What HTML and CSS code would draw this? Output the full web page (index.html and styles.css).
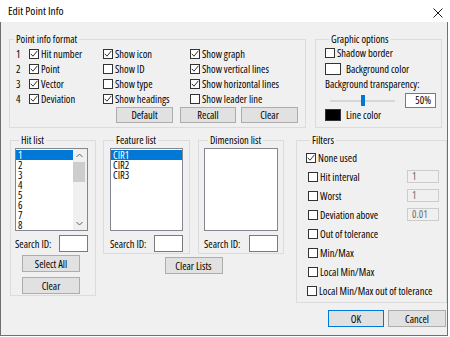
FILE: index.html
```html
<!DOCTYPE html>
<html>
<head>
<meta charset="utf-8">
<title>Edit Point Info</title>
<link rel="stylesheet" href="styles.css">
</head>
<body>
<div class="window">
  <div class="titlebar">
    <span class="title">Edit Point Info</span>
    <svg class="close" width="10" height="10" viewBox="0 0 10 10"><path d="M0.5 0.5 L9.5 9.5 M9.5 0.5 L0.5 9.5" stroke="#1a1a1a" stroke-width="1" fill="none"/></svg>
  </div>
  <div class="client">
    <div class="toprow">
      <fieldset class="group format">
        <legend>Point info format</legend>
        <div class="format-grid">
          <span class="num">1</span>
          <label class="chk"><span class="box"><svg width="8" height="8" viewBox="0 0 8 8"><path d="M0.8 3.8 L3 6.2 L7.4 0.8" stroke="#333" fill="none"/></svg></span>Hit number</label>
          <label class="chk"><span class="box"><svg width="8" height="8" viewBox="0 0 8 8"><path d="M0.8 3.8 L3 6.2 L7.4 0.8" stroke="#333" fill="none"/></svg></span>Show icon</label>
          <label class="chk"><span class="box"><svg width="8" height="8" viewBox="0 0 8 8"><path d="M0.8 3.8 L3 6.2 L7.4 0.8" stroke="#333" fill="none"/></svg></span>Show graph</label>

          <span class="num">2</span>
          <label class="chk"><span class="box"><svg width="8" height="8" viewBox="0 0 8 8"><path d="M0.8 3.8 L3 6.2 L7.4 0.8" stroke="#333" fill="none"/></svg></span>Point</label>
          <label class="chk"><span class="box"></span>Show ID</label>
          <label class="chk"><span class="box"><svg width="8" height="8" viewBox="0 0 8 8"><path d="M0.8 3.8 L3 6.2 L7.4 0.8" stroke="#333" fill="none"/></svg></span>Show vertical lines</label>

          <span class="num">3</span>
          <label class="chk"><span class="box"><svg width="8" height="8" viewBox="0 0 8 8"><path d="M0.8 3.8 L3 6.2 L7.4 0.8" stroke="#333" fill="none"/></svg></span>Vector</label>
          <label class="chk"><span class="box"></span>Show type</label>
          <label class="chk"><span class="box"><svg width="8" height="8" viewBox="0 0 8 8"><path d="M0.8 3.8 L3 6.2 L7.4 0.8" stroke="#333" fill="none"/></svg></span>Show horizontal lines</label>

          <span class="num">4</span>
          <label class="chk"><span class="box"><svg width="8" height="8" viewBox="0 0 8 8"><path d="M0.8 3.8 L3 6.2 L7.4 0.8" stroke="#333" fill="none"/></svg></span>Deviation</label>
          <label class="chk"><span class="box"><svg width="8" height="8" viewBox="0 0 8 8"><path d="M0.8 3.8 L3 6.2 L7.4 0.8" stroke="#333" fill="none"/></svg></span>Show headings</label>
          <label class="chk"><span class="box"></span>Show leader line</label>
        </div>
        <div class="format-buttons">
          <button class="btn b-default">Default</button>
          <button class="btn b-recall">Recall</button>
          <button class="btn b-clear">Clear</button>
        </div>
      </fieldset>

      <fieldset class="group graphic">
        <legend>Graphic options</legend>
        <label class="chk g-shadow"><span class="box"></span>Shadow border</label>
        <div class="swatch-row sw-bg"><span class="swatch"></span>Background color</div>
        <div class="trans">Background transparency:</div>
        <div class="slider-row">
          <div class="slider"><span class="thumb"></span></div>
          <div class="pct">50%</div>
        </div>
        <div class="swatch-row sw-line"><span class="swatch black"></span>Line color</div>
      </fieldset>
    </div>

    <div class="bottomrow">
      <fieldset class="group hit">
        <legend>Hit list</legend>
        <div class="listbox">
          <div class="items">
            <div class="item sel">1</div>
            <div class="item">2</div>
            <div class="item">3</div>
            <div class="item">4</div>
            <div class="item">5</div>
            <div class="item">6</div>
            <div class="item">7</div>
            <div class="item">8</div>
          </div>
          <div class="scrollbar">
            <div class="arrow"><svg width="7" height="5" viewBox="0 0 7 5"><path d="M0.5 4 L3.5 1 L6.5 4" stroke="#606060" fill="none"/></svg></div>
            <div class="sthumb"></div>
            <div class="strack"></div>
            <div class="arrow"><svg width="7" height="5" viewBox="0 0 7 5"><path d="M0.5 1 L3.5 4 L6.5 1" stroke="#606060" fill="none"/></svg></div>
          </div>
        </div>
        <div class="search"><span>Search ID:</span><span class="edit"></span></div>
        <button class="btn hit-btn b-selall">Select All</button>
        <button class="btn hit-btn b-hclear">Clear</button>
      </fieldset>

      <div class="fd">
        <div class="fd-groups">
          <fieldset class="group feature">
            <legend>Feature list</legend>
            <div class="listbox">
              <div class="items">
                <div class="item sel">CIR1</div>
                <div class="item">CIR2</div>
                <div class="item">CIR3</div>
              </div>
            </div>
            <div class="search"><span>Search ID:</span><span class="edit"></span></div>
          </fieldset>
          <fieldset class="group dim">
            <legend>Dimension list</legend>
            <div class="listbox wide">
              <div class="items"></div>
            </div>
            <div class="search wide"><span>Search ID:</span><span class="edit"></span></div>
          </fieldset>
        </div>
        <button class="btn clearlists">Clear Lists</button>
      </div>

      <div class="right">
        <fieldset class="group filters">
          <legend>Filters</legend>
          <label class="chk frow first"><span class="box"><svg width="8" height="8" viewBox="0 0 8 8"><path d="M0.8 3.8 L3 6.2 L7.4 0.8" stroke="#333" fill="none"/></svg></span>None used</label>
          <div class="frow ind"><label class="chk"><span class="box"></span>Hit interval</label><span class="fedit">1</span></div>
          <div class="frow ind"><label class="chk"><span class="box"></span>Worst</label><span class="fedit">1</span></div>
          <div class="frow ind"><label class="chk"><span class="box"></span>Deviation above</label><span class="fedit">0.01</span></div>
          <div class="frow ind"><label class="chk"><span class="box"></span>Out of tolerance</label></div>
          <div class="frow ind"><label class="chk"><span class="box"></span>Min/Max</label></div>
          <div class="frow ind"><label class="chk"><span class="box"></span>Local Min/Max</label></div>
          <div class="frow ind1"><label class="chk"><span class="box"></span>Local Min/Max out of tolerance</label></div>
        </fieldset>
        <div class="okcancel">
          <button class="btn b-ok">OK</button>
          <button class="btn b-cancel">Cancel</button>
        </div>
      </div>
    </div>
  </div>
</div>
</body>
</html>
```

FILE: styles.css
```css
* { box-sizing: border-box; }
html, body { margin: 0; padding: 0; background: #ffffff; }
body {
  font-family: "Open Sans", "Liberation Sans", Arial, sans-serif;
  font-stretch: 87.5%;
  font-weight: 400;
  font-size: 10.5px;
  color: #000;
}
.window { width: 448px; height: 336px; display: flex; flex-direction: column; }
.titlebar {
  height: 22px; flex: none; background: #fff;
  display: flex; justify-content: space-between; align-items: flex-start;
  padding: 0 5px 0 8px;
}
.title { font-size: 11.5px; line-height: 14px; margin-top: 4px; }
.close { margin-top: 8px; display: block; }
.client {
  flex: 1; background: #f0f0f0;
  border: 1px solid #707070; border-top: 0;
}

.group { margin: 0; padding: 0; border: 1px solid #dcdcdc; min-width: 0; }
.group legend { padding: 0 2px; margin-left: 4px; line-height: 12px; height: 12px; white-space: nowrap; }

.chk { display: flex; align-items: center; gap: 2px; white-space: nowrap; }
.box {
  width: 10px; height: 10px; flex: none;
  border: 1px solid #333; background: #fff;
  display: flex; align-items: center; justify-content: center;
}
.box svg { display: block; }

.btn {
  font: inherit; color: #000; padding: 0; margin: 0;
  background: #e1e1e1; border: 1px solid #adadad;
  display: flex; align-items: center; justify-content: center;
  height: 17px; flex: none;
}

/* top row */
.toprow { display: flex; align-items: flex-start; margin-top: 11px; }
.format { margin-left: 8px; width: 297px; padding-bottom: 4px; }
.format-grid {
  display: grid;
  grid-template-columns: 13px 74px 87px 1fr;
  grid-auto-rows: 15px;
  align-items: center;
  padding: 1px 0 0 6px;
}
.format-buttons { display: flex; margin-top: 1px; padding-left: 106px; }
.format-buttons .btn { height: 16px; }
.b-default { width: 57px; }
.b-recall { width: 56px; margin-left: 7px; }
.b-clear { width: 57px; margin-left: 5px; }

.graphic { margin-left: 9px; width: 127px; padding: 0 0 6px 9px; }
.g-shadow { height: 12px; margin-top: 2px; }
.swatch-row { display: flex; align-items: center; gap: 5px; height: 12px; }
.sw-bg { margin-top: 4px; }
.sw-line { margin-top: 1px; }
.swatch { width: 16px; height: 12px; border: 1px solid #333; background: #fff; flex: none; }
.swatch.black { background: #000; }
.trans { margin-top: 3px; height: 12px; line-height: 12px; white-space: nowrap; }
.slider-row { display: flex; align-items: center; margin-top: 3px; height: 15px; padding-left: 5px; }
.slider {
  width: 65px; height: 15px; display: flex; align-items: center; justify-content: center;
  background: linear-gradient(#d6d6d6, #d6d6d6) center / 100% 2px no-repeat;
}
.thumb { width: 4px; height: 11px; background: #0078d7; display: block; }
.pct {
  margin-left: 10px; width: 31px; height: 15px;
  border: 1px solid #7a7a7a; background: #fff;
  text-align: right; padding-right: 4px; line-height: 13px;
}

/* bottom row */
.bottomrow { display: flex; align-items: flex-start; margin-top: 6px; }
.hit { margin-left: 9px; width: 86px; padding: 0 0 1px 4px; }
.listbox {
  width: 73px; height: 83px; margin-top: 2px;
  border: 1px solid #828790; background: #fff;
  display: flex; overflow: hidden;
}
.listbox.wide { width: 74px; }
.items { flex: 1; padding-top: 1px; line-height: 10px; }
.item { height: 10px; padding-left: 2px; white-space: nowrap; }
.item.sel { background: #0078d7; color: #fff; }
.scrollbar { width: 14px; flex: none; background: #f0f0f0; display: flex; flex-direction: column; align-items: flex-start; }
.arrow { height: 13px; width: 13px; display: flex; align-items: center; justify-content: center; }
.arrow svg { display: block; }
.sthumb { width: 12px; height: 20px; background: #cdcdcd; flex: none; }
.strack { flex: 1; }
.search { display: flex; justify-content: space-between; align-items: center; width: 73px; height: 17px; margin-top: 4px; white-space: nowrap; }
.search.wide { width: 74px; }
.edit { width: 29px; height: 17px; border: 1px solid #7a7a7a; background: #fff; }
.hit-btn { width: 58px; margin-left: 7px; }
.b-selall { margin-top: 3px; }
.b-hclear { margin-top: 5px; }

.fd { margin-left: 7px; display: flex; flex-direction: column; align-items: center; }
.fd-groups { display: flex; gap: 8px; }
.feature { width: 87px; padding: 0 0 1px 6px; }
.dim { width: 86px; padding: 0 0 1px 5px; }
.clearlists { width: 58px; margin-top: 3px; }

.right { margin-left: 12px; width: 151px; }
.filters { padding: 0 7px 2px 9px; }
.frow { display: flex; align-items: center; height: 19px; }
.frow.first { margin-top: 2px; }
.frow.ind { padding-left: 2px; }
.frow.ind1 { padding-left: 1px; }
.fedit {
  margin-left: auto; width: 32px; height: 13px;
  border: 1px solid #cccccc; background: #f0f0f0; color: #6d6d6d;
  padding-left: 4px; line-height: 11px;
}
.okcancel { display: flex; justify-content: flex-end; gap: 4px; margin-top: 7px; padding-right: 1px; }
.b-ok { width: 56px; border-color: #0078d7; }
.b-cancel { width: 58px; }
```
